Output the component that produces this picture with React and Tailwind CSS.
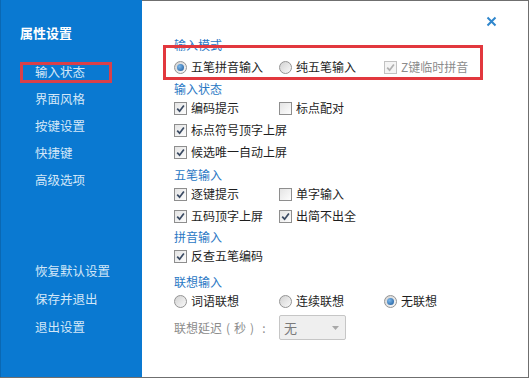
import React from 'react';

const font = { fontFamily: '"Noto Sans CJK SC", "Noto Sans", sans-serif' };

const Radio = ({ checked }) => (
  <span className="flex h-[13px] w-[13px] shrink-0 items-center justify-center rounded-full border border-[#949494] bg-gradient-to-br from-[#d2d2d2] to-[#fafafa]">
    {checked && (
      <span className="h-[7px] w-[7px] rounded-full bg-[radial-gradient(circle_at_35%_35%,#7cb8ec,#1a5797)]" />
    )}
  </span>
);

const Check = ({ checked, disabled }) => (
  <span
    className={
      disabled
        ? 'flex h-[13px] w-[13px] shrink-0 items-center justify-center border border-[#c2c2c2] bg-[#f4f4f4]'
        : 'flex h-[13px] w-[13px] shrink-0 items-center justify-center border border-[#8e8e8e] bg-gradient-to-br from-[#e4e4e4] to-[#fdfdfd]'
    }
  >
    {checked && (
      <svg width="9" height="9" viewBox="0 0 9 9">
        <path
          d="M1.2 4.6 L3.6 7.2 L7.9 1.4"
          fill="none"
          stroke={disabled ? '#b0b0b0' : '#3b4b63'}
          strokeWidth="1.7"
        />
      </svg>
    )}
  </span>
);

const Item = ({ type = 'check', checked, disabled, children }) => (
  <div className="flex w-[105px] items-center gap-[4px]">
    {type === 'radio' ? <Radio checked={checked} /> : <Check checked={checked} disabled={disabled} />}
    <span className={disabled ? 'whitespace-nowrap text-[#8c8c8c]' : 'whitespace-nowrap text-[#1e1e1e]'}>{children}</span>
  </div>
);

const Row = ({ children, className = 'h-[22px]' }) => (
  <div className={`flex items-center ${className}`}>{children}</div>
);

const Label = ({ children, className = '' }) => (
  <div className={`h-[16px] leading-[16px] text-[#2a78c4] ${className}`}>{children}</div>
);

export default function App() {
  const menu = ['输入状态', '界面风格', '按键设置', '快捷键', '高级选项'];
  const bottom = ['恢复默认设置', '保存并退出', '退出设置'];

  return (
    <div style={font} className="relative flex h-[378px] w-[529px] overflow-hidden border-r border-b border-[#6f6f6f] bg-white text-[12px]">
      {/* sidebar */}
      <div className="flex w-[142px] shrink-0 flex-col border-l border-[#0a68b3] bg-[#0a79d1] text-[12.5px] text-[#d3e7f8]">
        <div className="mt-[24px] h-[17px] pl-[19px] text-[13px] leading-[17px] font-bold text-white">属性设置</div>
        <div className="mt-[18px] flex flex-col">
          {menu.map((m) => (
            <div key={m} className="flex h-[27px] items-center pl-[34px]">
              {m}
            </div>
          ))}
        </div>
        <div className="mt-[63px] flex flex-col">
          {bottom.map((m) => (
            <div key={m} className="flex h-[28px] items-center pl-[34px]">
              {m}
            </div>
          ))}
        </div>
      </div>

      {/* content */}
      <div className="flex flex-1 flex-col border-t border-[#6f6f6f]">
        <div className="flex h-[35px] justify-end pt-[15px] pr-[31px]">
          <svg width="11" height="11" viewBox="0 0 11 11">
            <path d="M1.5 1.5 L9.5 9.5 M9.5 1.5 L1.5 9.5" stroke="#2f86cc" strokeWidth="2" />
          </svg>
        </div>
        <div className="flex flex-col pl-[32px]">
          <div className="h-[18px] leading-[18px] text-[#2a78c4]">输入模式</div>
          <Row className="h-[26px]">
            <Item type="radio" checked>五笔拼音输入</Item>
            <Item type="radio">纯五笔输入</Item>
            <Item checked disabled>Z键临时拼音</Item>
          </Row>

          <Label className="mt-[1px]">输入状态</Label>
          <Row>
            <Item checked>编码提示</Item>
            <Item>标点配对</Item>
          </Row>
          <Row>
            <Item checked>标点符号顶字上屏</Item>
          </Row>
          <Row>
            <Item checked>候选唯一自动上屏</Item>
          </Row>

          <Label className="mt-[4px]">五笔输入</Label>
          <Row>
            <Item checked>逐键提示</Item>
            <Item>单字输入</Item>
          </Row>
          <Row>
            <Item checked>五码顶字上屏</Item>
            <Item checked>出简不出全</Item>
          </Row>

          <Label className="mt-[2px]">拼音输入</Label>
          <Row>
            <Item checked>反查五笔编码</Item>
          </Row>

          <Label className="mt-[7px]">联想输入</Label>
          <Row>
            <Item type="radio">词语联想</Item>
            <Item type="radio">连续联想</Item>
            <Item type="radio" checked>无联想</Item>
          </Row>
          <div className="mt-[3px] flex h-[25px] items-center">
            <span className="flex w-[105px] whitespace-nowrap text-[#8c8c8c]">
              <span>联想延迟</span>
              <span className="w-[12px] text-center">(</span>
              <span>秒</span>
              <span className="w-[12px] text-center">)</span>
              <span className="w-[12px] text-center">:</span>
            </span>
            <div className="flex h-[25px] w-[67px] items-center justify-between rounded-[2px] border border-[#c6c6c6] bg-[#efefef] pr-[6px] pl-[4px] text-[13px] text-[#7a7a7a]">
              <span>无</span>
              <svg width="7" height="4" viewBox="0 0 7 4">
                <path d="M0 0 L7 0 L3.5 4 Z" fill="#a8a8a8" />
              </svg>
            </div>
          </div>
        </div>
      </div>

      {/* annotation boxes */}
      <div className="pointer-events-none absolute top-[62px] left-[20px] h-[21px] w-[92px] border-[3px] border-[#d8404a]" />
      <div className="pointer-events-none absolute top-[45px] left-[163px] h-[35px] w-[320px] border-[3px] border-[#e2383e]" />
    </div>
  );
}
